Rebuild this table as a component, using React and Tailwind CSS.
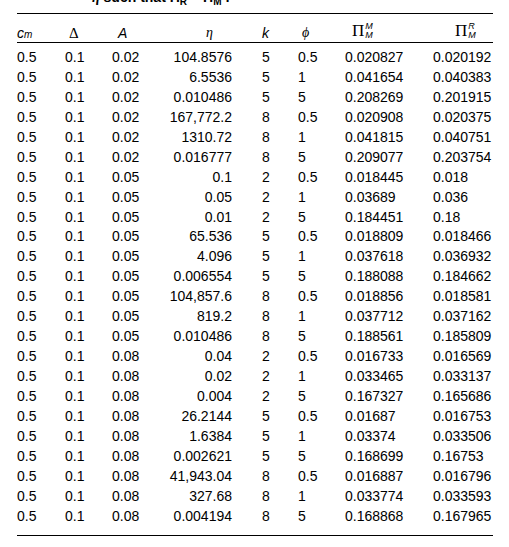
import React from "react";

const rows = [
  ["0.5", "0.1", "0.02", "104.8576", "5", "0.5", "0.020827", "0.020192"],
  ["0.5", "0.1", "0.02", "6.5536", "5", "1", "0.041654", "0.040383"],
  ["0.5", "0.1", "0.02", "0.010486", "5", "5", "0.208269", "0.201915"],
  ["0.5", "0.1", "0.02", "167,772.2", "8", "0.5", "0.020908", "0.020375"],
  ["0.5", "0.1", "0.02", "1310.72", "8", "1", "0.041815", "0.040751"],
  ["0.5", "0.1", "0.02", "0.016777", "8", "5", "0.209077", "0.203754"],
  ["0.5", "0.1", "0.05", "0.1", "2", "0.5", "0.018445", "0.018"],
  ["0.5", "0.1", "0.05", "0.05", "2", "1", "0.03689", "0.036"],
  ["0.5", "0.1", "0.05", "0.01", "2", "5", "0.184451", "0.18"],
  ["0.5", "0.1", "0.05", "65.536", "5", "0.5", "0.018809", "0.018466"],
  ["0.5", "0.1", "0.05", "4.096", "5", "1", "0.037618", "0.036932"],
  ["0.5", "0.1", "0.05", "0.006554", "5", "5", "0.188088", "0.184662"],
  ["0.5", "0.1", "0.05", "104,857.6", "8", "0.5", "0.018856", "0.018581"],
  ["0.5", "0.1", "0.05", "819.2", "8", "1", "0.037712", "0.037162"],
  ["0.5", "0.1", "0.05", "0.010486", "8", "5", "0.188561", "0.185809"],
  ["0.5", "0.1", "0.08", "0.04", "2", "0.5", "0.016733", "0.016569"],
  ["0.5", "0.1", "0.08", "0.02", "2", "1", "0.033465", "0.033137"],
  ["0.5", "0.1", "0.08", "0.004", "2", "5", "0.167327", "0.165686"],
  ["0.5", "0.1", "0.08", "26.2144", "5", "0.5", "0.01687", "0.016753"],
  ["0.5", "0.1", "0.08", "1.6384", "5", "1", "0.03374", "0.033506"],
  ["0.5", "0.1", "0.08", "0.002621", "5", "5", "0.168699", "0.16753"],
  ["0.5", "0.1", "0.08", "41,943.04", "8", "0.5", "0.016887", "0.016796"],
  ["0.5", "0.1", "0.08", "327.68", "8", "1", "0.033774", "0.033593"],
  ["0.5", "0.1", "0.08", "0.004194", "8", "5", "0.168868", "0.167965"],
];

const cols = "grid grid-cols-[48px_47px_38px_82px_66px_47px_88px_60px]";

// Π with stacked super/subscript
const Pi = ({ sup }) => (
  <span className="inline-flex items-center">
    <span className="font-['Liberation_Serif',serif] text-[17px] leading-none">Π</span>
    <span className="inline-flex flex-col ml-[1px] text-[9px] leading-[9px] italic">
      <span>{sup}</span>
      <span>M</span>
    </span>
  </span>
);

export default function App() {
  return (
    <div className="w-[509px] h-[547px] bg-white text-black font-['Liberation_Sans',Arial,sans-serif] text-[14px] overflow-hidden">
      {/* caption, cut off at the top of the crop */}
      <div className="h-[13px] overflow-hidden pl-[92px]">
        <div className="-mt-[11px] font-bold text-[14px] leading-[16px] whitespace-nowrap">
          <span className="font-['Liberation_Serif',serif] italic">η</span> such that Π
          <sub className="text-[10px]">R</sub> = Π<sub className="text-[10px]">M</sub> :
        </div>
      </div>

      <div className="mx-[17px] w-[476px] border-t border-black">
        {/* header */}
        <div className={`${cols} h-[29px] pt-[9px] leading-[20px] border-b border-black`}>
          <div className="italic">
            c<span className="text-[10px]">m</span>
          </div>
          <div className="pl-[4px] font-['Liberation_Serif',serif] text-[15px]">Δ</div>
          <div className="pl-[6px] italic">A</div>
          <div className="text-right pr-[19px] italic font-['Liberation_Serif',serif]">η</div>
          <div className="pl-[30px] italic">k</div>
          <div className="pl-[4px] italic font-['Liberation_Serif',serif]">ϕ</div>
          <div className="pl-[7px] -mt-[2px]">
            <Pi sup="M" />
          </div>
          <div className="pl-[22px] -mt-[2px]">
            <Pi sup="R" />
          </div>
        </div>

        {/* body */}
        <div className="pt-[5px] pb-[8px] border-b border-black">
          {rows.map((r, i) => (
            <div key={i} className={`${cols} h-[19.95px] leading-[19.95px]`}>
              <div>{r[0]}</div>
              <div>{r[1]}</div>
              <div>{r[2]}</div>
              <div className="text-right">{r[3]}</div>
              <div className="pl-[30px]">{r[4]}</div>
              <div>{r[5]}</div>
              <div>{r[6]}</div>
              <div>{r[7]}</div>
            </div>
          ))}
        </div>
      </div>
    </div>
  );
}
